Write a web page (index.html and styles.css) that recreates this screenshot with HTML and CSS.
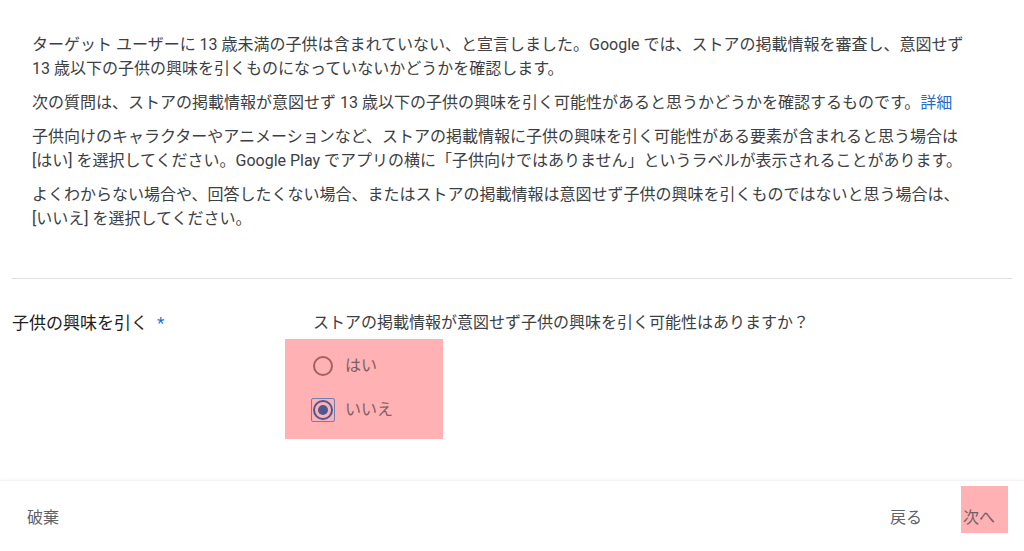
FILE: index.html
```html
<!DOCTYPE html>
<html lang="ja">
<head>
<meta charset="utf-8">
<title>子供の興味を引く</title>
<link rel="stylesheet" href="styles.css">
</head>
<body>
<div class="app">
  <main class="content">
    <section class="intro">
      <p>ターゲット ユーザーに 13 歳未満の子供は含まれていない、と宣言しました。Google では、ストアの掲載情報を審査し、意図せず 13 歳以下の子供の興味を引くものになっていないかどうかを確認します。</p>
      <p>次の質問は、ストアの掲載情報が意図せず 13 歳以下の子供の興味を引く可能性があると思うかどうかを確認するものです。<a class="link" href="#">詳細</a></p>
      <p>子供向けのキャラクターやアニメーションなど、ストアの掲載情報に子供の興味を引く可能性がある要素が含まれると思う場合は [はい] を選択してください。Google Play でアプリの横に「子供向けではありません」というラベルが表示されることがあります。</p>
      <p>よくわからない場合や、回答したくない場合、またはストアの掲載情報は意図せず子供の興味を引くものではないと思う場合は、 [いいえ] を選択してください。</p>
    </section>
    <hr class="divider">
    <section class="field">
      <div class="field-label">子供の興味を引く<span class="req">*</span></div>
      <div class="field-body">
        <p class="question">ストアの掲載情報が意図せず子供の興味を引く可能性はありますか？</p>
        <div class="radio-group">
          <label class="radio">
            <span class="radio-icon"></span>
            <span class="radio-text">はい</span>
          </label>
          <label class="radio">
            <span class="radio-focus"><span class="radio-icon checked"></span></span>
            <span class="radio-text">いいえ</span>
          </label>
        </div>
      </div>
    </section>
  </main>
  <footer class="footer">
    <button class="btn btn-discard">破棄</button>
    <div class="footer-right">
      <button class="btn">戻る</button>
      <button class="btn btn-next">次へ</button>
    </div>
  </footer>
</div>
</body>
</html>
```

FILE: styles.css
```css
html, body {
  margin: 0;
  padding: 0;
  background: #ffffff;
}

body {
  font-family: Roboto, "Noto Sans CJK JP", sans-serif;
  font-size: 16px;
  line-height: 24px;
  color: #3c4043;
}

.app {
  height: 551px;
  display: flex;
  flex-direction: column;
  overflow: hidden;
}

.content {
  flex: 1;
}

.intro {
  padding: 33px 46px 0 32px;
}

.intro p {
  margin: 0 0 10px;
}

.intro p:last-child {
  margin-bottom: 0;
}

.link {
  color: #2a6bc4;
  text-decoration: none;
}

.divider {
  margin: 47px 12px 0;
  border: 0;
  border-top: 1px solid #e0e0e0;
  height: 0;
}

.field {
  display: flex;
  padding: 32px 0 0 12px;
}

.field-label {
  width: 301px;
  flex: none;
  color: #202124;
  font-size: 17px;
}

.req {
  color: #1a73e8;
  margin-left: 9px;
}

.field-body {
  display: flex;
  flex-direction: column;
  align-items: flex-start;
}

.question {
  margin: 0;
  color: #3c4043;
}

.radio-group {
  margin: 4px 0 0 -28px;
  width: 130px;
  padding: 5px 0 7px 28px;
  background: #ffb1b3;
  display: flex;
  flex-direction: column;
}

.radio {
  display: flex;
  align-items: center;
  height: 44px;
  gap: 12px;
  color: #7d5f62;
}

.radio-icon {
  width: 20px;
  height: 20px;
  box-sizing: border-box;
  border: 2px solid #a2625f;
  border-radius: 50%;
  display: block;
  position: relative;
}

.radio-icon.checked {
  border-color: #4c5890;
}

.radio-icon.checked::after {
  content: "";
  position: absolute;
  left: 3px;
  top: 3px;
  width: 10px;
  height: 10px;
  border-radius: 50%;
  background: #4c5890;
}

.radio-focus {
  display: block;
  margin: -2px;
  padding: 1px;
  border: 1px solid #6f7fb0;
  border-radius: 2px;
}

.footer {
  height: 71px;
  box-sizing: border-box;
  border-top: 1px solid #f3f3f3;
  box-shadow: 0 -1px 3px rgba(0, 0, 0, 0.03);
  display: flex;
  justify-content: space-between;
  align-items: flex-start;
  padding: 5px 16px 0 15px;
}

.footer-right {
  display: flex;
  align-items: flex-start;
  gap: 27px;
}

.btn {
  font: inherit;
  background: none;
  border: 0;
  color: #5f6368;
  padding: 20px 12px 3px;
  line-height: 24px;
  cursor: pointer;
}

.btn-next {
  background: #ffb1b3;
  color: #6f5f6a;
  width: 47px;
  padding: 20px 13px 3px 2px;
  text-align: left;
}
```
